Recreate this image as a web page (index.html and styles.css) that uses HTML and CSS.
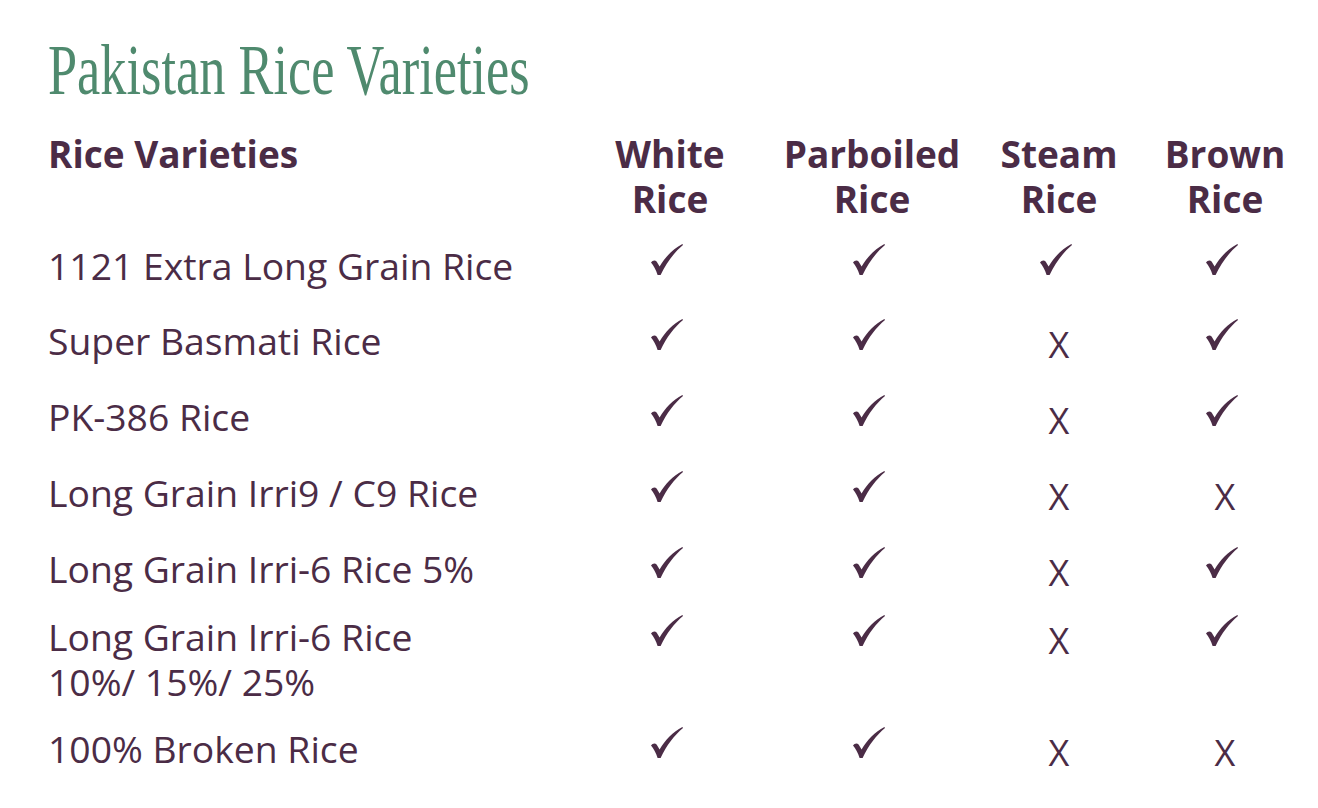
FILE: index.html
```html
<!DOCTYPE html>
<html>
<head>
<meta charset="utf-8">
<link rel="stylesheet" href="styles.css">
</head>
<body>
<svg width="0" height="0" class="defs" aria-hidden="true">
  <defs>
    <symbol id="tick" viewBox="0 0 32 31">
      <path d="M0 18.5 C1.5 16.3 4.2 15.8 5.6 17.6 L8.6 22.6 C14 13 22 5 31.4 0 L32 1 C23.5 8 15.5 18.5 9.6 31 L6.6 31 C5 26 2.6 21.4 0 18.5 Z"/>
    </symbol>
  </defs>
</svg>
<div class="page">
  <h1 class="title"><span class="title-text">Pakistan Rice Varieties</span></h1>
  <div class="table">
    <div class="row head">
      <div class="cell name">Rice Varieties</div>
      <div class="cell mark">White<br>Rice</div>
      <div class="cell mark">Parboiled<br>Rice</div>
      <div class="cell mark">Steam<br>Rice</div>
      <div class="cell mark">Brown<br>Rice</div>
    </div>
    <div class="row">
      <div class="cell name">1121 Extra Long Grain Rice</div>
      <div class="cell mark"><svg class="yes"><use href="#tick"/></svg></div>
      <div class="cell mark"><svg class="yes"><use href="#tick"/></svg></div>
      <div class="cell mark"><svg class="yes"><use href="#tick"/></svg></div>
      <div class="cell mark"><svg class="yes"><use href="#tick"/></svg></div>
    </div>
    <div class="row">
      <div class="cell name">Super Basmati Rice</div>
      <div class="cell mark"><svg class="yes"><use href="#tick"/></svg></div>
      <div class="cell mark"><svg class="yes"><use href="#tick"/></svg></div>
      <div class="cell mark"><span class="no">X</span></div>
      <div class="cell mark"><svg class="yes"><use href="#tick"/></svg></div>
    </div>
    <div class="row">
      <div class="cell name">PK-386 Rice</div>
      <div class="cell mark"><svg class="yes"><use href="#tick"/></svg></div>
      <div class="cell mark"><svg class="yes"><use href="#tick"/></svg></div>
      <div class="cell mark"><span class="no">X</span></div>
      <div class="cell mark"><svg class="yes"><use href="#tick"/></svg></div>
    </div>
    <div class="row">
      <div class="cell name">Long Grain Irri9 / C9 Rice</div>
      <div class="cell mark"><svg class="yes"><use href="#tick"/></svg></div>
      <div class="cell mark"><svg class="yes"><use href="#tick"/></svg></div>
      <div class="cell mark"><span class="no">X</span></div>
      <div class="cell mark"><span class="no">X</span></div>
    </div>
    <div class="row short">
      <div class="cell name">Long Grain Irri-6 Rice 5%</div>
      <div class="cell mark"><svg class="yes"><use href="#tick"/></svg></div>
      <div class="cell mark"><svg class="yes"><use href="#tick"/></svg></div>
      <div class="cell mark"><span class="no">X</span></div>
      <div class="cell mark"><svg class="yes"><use href="#tick"/></svg></div>
    </div>
    <div class="row short">
      <div class="cell name">Long Grain Irri-6 Rice<br>10%/ 15%/ 25%</div>
      <div class="cell mark"><svg class="yes"><use href="#tick"/></svg></div>
      <div class="cell mark"><svg class="yes"><use href="#tick"/></svg></div>
      <div class="cell mark"><span class="no">X</span></div>
      <div class="cell mark"><svg class="yes"><use href="#tick"/></svg></div>
    </div>
    <div class="row">
      <div class="cell name">100% Broken Rice</div>
      <div class="cell mark"><svg class="yes"><use href="#tick"/></svg></div>
      <div class="cell mark"><svg class="yes"><use href="#tick"/></svg></div>
      <div class="cell mark"><span class="no">X</span></div>
      <div class="cell mark"><span class="no">X</span></div>
    </div>
  </div>
</div>
</body>
</html>
```
FILE: styles.css
```css
html, body {
  margin: 0;
  padding: 0;
  background: #ffffff;
}
body {
  font-family: "Open Sans", "Liberation Sans", sans-serif;
  color: #4b2c46;
}
.defs {
  position: absolute;
  width: 0;
  height: 0;
  overflow: hidden;
}
.page {
  padding: 30px 0 0 48px;
}
.title {
  margin: 0;
  height: 80px;
  font-family: "Liberation Serif", serif;
  font-weight: normal;
  font-size: 72px;
  line-height: 80px;
  color: #4f8a6e;
  white-space: nowrap;
}
.title-text {
  display: inline-block;
  transform: scaleX(0.727);
  transform-origin: left center;
}
.table {
  margin-top: 21px;
}
.row {
  display: grid;
  grid-template-columns: 522px 200px 204px 170px 162px;
  padding: 15px 0;
  font-size: 37.3px;
  line-height: 45px;
}
.row.short {
  padding-bottom: 7px;
}
.row.head {
  padding: 0 0 7px;
  font-weight: 700;
  font-size: 37px;
}
.cell.mark {
  text-align: center;
}
.yes {
  display: block;
  width: 32px;
  height: 31px;
  margin: 1px auto 0;
  fill: #4b2c46;
  position: relative;
  left: -3px;
}
.no {
  font-family: "Open Sans", sans-serif;
  font-weight: 400;
  font-size: 36px;
  position: relative;
  top: 3px;
}
```
